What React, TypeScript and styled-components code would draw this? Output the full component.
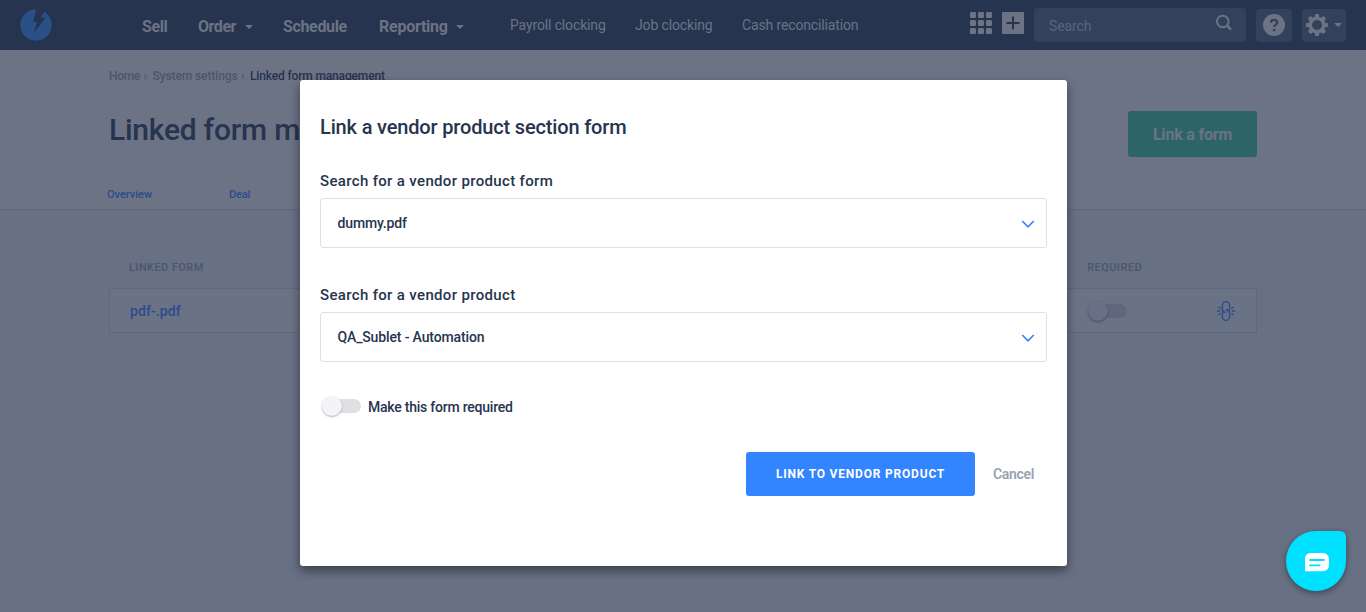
import React from "react";
import styled, { createGlobalStyle } from "styled-components";

const Global = createGlobalStyle`
  * { box-sizing: border-box; }
  body { margin: 0; overflow: hidden; font-family: Roboto, "Liberation Sans", sans-serif; }
  button { font-family: inherit; border: 0; cursor: pointer; }
`;

const Page = styled.div`
  height: 612px;
  overflow: hidden;
  background: #687084;
  color: #27344f;
`;

const Nav = styled.nav`
  height: 50px;
  display: flex;
  background: #27344f;
  color: #6b7385;
`;
const Logo = styled.svg`
  flex: none;
  margin: 9px 0 0 20px;
`;
const MainLinks = styled.div`
  display: flex;
  margin-left: 90px;
  line-height: 20px;
  padding-top: 17px;
`;
const MainLink = styled.a<{ $w: number; $ls: number }>`
  display: flex;
  justify-content: space-between;
  align-items: center;
  height: 20px;
  width: ${(p) => p.$w}px;
  margin-right: 30px;
  font-size: 16px;
  font-weight: 700;
  white-space: nowrap;
  letter-spacing: ${(p) => p.$ls}px;
`;
const Caret = styled.span`
  border: 4px solid transparent;
  border-top-color: #6b7385;
  border-bottom: 0;
`;
const SubLinks = styled.div`
  display: flex;
  gap: 30px;
  margin-left: 16px;
  padding-top: 15px;
  line-height: 20px;
`;
const SubLink = styled.a<{ $w: number }>`
  width: ${(p) => p.$w}px;
  font-size: 14px;
  white-space: nowrap;
  letter-spacing: -0.14px;
`;
const Tools = styled.div`
  display: flex;
  gap: 10px;
  margin-left: auto;
  padding: 9px 20px 0 0;
`;
const ToolIcon = styled.svg`
  margin-top: 3px;
`;
const SearchBox = styled.div`
  width: 212px;
  height: 34px;
  margin-top: -1px;
  padding: 0 13px 0 15px;
  display: flex;
  justify-content: space-between;
  border-radius: 4px;
  background: #34415d;
  font-size: 14px;
  line-height: 37px;
  letter-spacing: -0.1px;
  color: #5b6579;
  & svg { margin-top: 6px; }
`;
const ToolButton = styled.div<{ $w: number }>`
  width: ${(p) => p.$w}px;
  height: 33px;
  display: flex;
  align-items: center;
  justify-content: center;
  gap: 6px;
  padding-bottom: 1px;
  border-radius: 4px;
  background: #34415d;
`;

const Header = styled.header`
  height: 160px;
  padding: 0 109px;
  background: #6b7385;
  border-bottom: 1px solid #5e677b;
`;
const Crumbs = styled.div`
  display: flex;
  padding-top: 18px;
  height: 61px;
  font-size: 12px;
  line-height: 16px;
  font-weight: 500;
  white-space: nowrap;
  color: #4b566c;
`;
const Crumb = styled.span<{ $w: number; $ls: number; $current?: boolean }>`
  width: ${(p) => p.$w}px;
  letter-spacing: ${(p) => p.$ls}px;
  color: ${(p) => (p.$current ? "#27344f" : "#4b566c")};
`;
const TitleRow = styled.div`
  display: flex;
  justify-content: space-between;
`;
const Title = styled.h1`
  margin: 0;
  font-size: 30px;
  line-height: 38px;
  font-weight: 500;
  letter-spacing: -0.25px;
`;
const LinkFormButton = styled.button`
  width: 129px;
  height: 46px;
  padding: 0;
  border-radius: 3px;
  background: #2d6465;
  color: #6b7385;
  font-size: 16px;
  font-weight: 700;
  letter-spacing: -0.2px;
`;
const Tabs = styled.div`
  display: flex;
  margin: 30px 0 0 -2px;
  font-size: 11px;
  line-height: 16px;
  font-weight: 500;
  color: #2b4b8c;
`;
const Tab = styled.a<{ $ls: number }>`
  width: 122px;
  letter-spacing: ${(p) => p.$ls}px;
`;

const Content = styled.main`
  padding: 50px 109px 0;
`;
const Columns = styled.div`
  display: flex;
  justify-content: space-between;
  padding: 0 115px 0 20px;
  height: 28px;
  font-size: 11px;
  line-height: 16px;
  font-weight: 500;
  letter-spacing: 0.42px;
  color: #4b566c;
`;
const Row = styled.div`
  height: 45px;
  display: flex;
  align-items: center;
  padding: 0 20px;
  border: 1px solid #5e677b;
  background: #6a7285;
`;
const FileLink = styled.a`
  flex: 1;
  font-size: 14px;
  font-weight: 500;
  letter-spacing: 0.1px;
  color: #2b4b8c;
`;
const Track = styled.span<{ $dim?: boolean }>`
  display: flex;
  align-items: center;
  width: 36px;
  height: 14px;
  border-radius: 7px;
  background: ${(p) => (p.$dim ? "#5e677b" : "#dfe0e4")};
`;
const Knob = styled.span<{ $dim?: boolean }>`
  flex: none;
  width: 20px;
  height: 20px;
  margin-left: -3px;
  border-radius: 50%;
  background: ${(p) => (p.$dim ? "#677084" : "#f3f4f7")};
  box-shadow: 0 1px 2px ${(p) => (p.$dim ? "rgba(39,52,79,.6)" : "rgba(0,0,0,.3)")};
`;
const UnlinkIcon = styled.svg`
  margin: 0 1px 0 90px;
`;

const Dialog = styled.section`
  position: absolute;
  left: 300px;
  top: 80px;
  width: 767px;
  height: 486px;
  padding: 34px 20px 0;
  border-radius: 3px;
  background: #fff;
  color: #27344f;
  box-shadow: 0 5px 11px rgba(0, 0, 0, 0.28), 0 4px 8px rgba(0, 0, 0, 0.2);
`;
const DialogTitle = styled.h2`
  margin: 0 0 30px;
  height: 26px;
  line-height: 26px;
  font-size: 20px;
  font-weight: 500;
  letter-spacing: -0.16px;
`;
const Field = styled.div`
  height: 114px;
`;
const FieldLabel = styled.div`
  height: 28px;
  line-height: 22px;
  font-size: 15px;
  font-weight: 500;
  letter-spacing: 0.34px;
`;
const Select = styled.div`
  height: 50px;
  display: flex;
  align-items: center;
  justify-content: space-between;
  padding: 0 11px 0 16.5px;
  border: 1px solid #dfe0e4;
  border-radius: 3px;
  font-size: 14px;
  font-weight: 500;
  letter-spacing: -0.14px;
  & svg { margin-top: 2px; }
`;
const ToggleRow = styled.div`
  display: flex;
  align-items: center;
  gap: 7px;
  height: 20px;
  margin-top: -1px;
  padding-left: 5px;
  font-size: 14px;
  font-weight: 500;
  letter-spacing: -0.23px;
  & > span { margin-top: -2px; }
`;
const Actions = styled.div`
  display: flex;
  justify-content: flex-end;
  align-items: center;
  gap: 18px;
  padding-right: 12px;
  margin-top: 35px;
`;
const Primary = styled.button`
  width: 229px;
  height: 44px;
  padding: 0;
  border-radius: 3px;
  background: #3385ff;
  color: #fff;
  font-size: 12px;
  font-weight: 700;
  letter-spacing: 0.8px;
`;
const Cancel = styled.a`
  width: 42px;
  font-size: 14px;
  font-weight: 600;
  letter-spacing: -0.3px;
  color: #9aa2b1;
`;
const Chat = styled.button`
  position: absolute;
  left: 1286px;
  top: 531px;
  width: 60px;
  height: 60px;
  padding: 3px 0 0 2px;
  display: flex;
  align-items: center;
  justify-content: center;
  border-radius: 30px 6px 30px 30px;
  background: #00e0ff;
  box-shadow: 0 2px 6px rgba(0, 0, 0, 0.4);
`;

const Chevron = () => (
  <svg width="14" height="10" viewBox="0 0 14 10" fill="none" stroke="#3385ff" strokeWidth="1.7">
    <path d="M1.2 2 7 7.8 12.8 2" />
  </svg>
);

const gearTeeth = [0, 45, 90, 135, 180, 225, 270, 315];

export default function App() {
  return (
    <>
      <Global />
      <Page>
        <Nav>
          <Logo width="32" height="32" viewBox="0 0 32 32">
            <circle cx="16" cy="16" r="15.7" fill="#2b5087" />
            <path fill="#27344f" d="M16.4-1 13 13h4l-3 10.8L25.4 8.8h-4.7L25 1.5V-1z" />
          </Logo>
          <MainLinks>
            <MainLink $w={26} $ls={-0.4}>Sell</MainLink>
            <MainLink $w={55} $ls={-0.45}>Order<Caret /></MainLink>
            <MainLink $w={66} $ls={-0.35}>Schedule</MainLink>
            <MainLink $w={85} $ls={-0.25}>Reporting<Caret /></MainLink>
          </MainLinks>
          <SubLinks>
            <SubLink $w={95}>Payroll clocking</SubLink>
            <SubLink $w={77}>Job clocking</SubLink>
            <SubLink $w={117}>Cash reconciliation</SubLink>
          </SubLinks>
          <Tools>
            <ToolIcon width="22" height="22" fill="#6b7385">
              {[0, 8, 16].map((y) => [0, 8, 16].map((x) => (
                <rect key={x + "-" + y} x={x} y={y} width="6" height="6" rx="1.2" />
              )))}
            </ToolIcon>
            <ToolIcon width="22" height="22">
              <rect width="22" height="22" rx="1" fill="#6b7385" />
              <path d="M11 4.5v13M4.5 11h13" stroke="#27344f" strokeWidth="2" />
            </ToolIcon>
            <SearchBox>
              Search
              <svg width="18" height="18" fill="none" stroke="#6b7385" strokeWidth="2">
                <circle cx="7.8" cy="7.5" r="5.8" />
                <path d="m12 11.7 4 4" strokeWidth="2.6" />
              </svg>
            </SearchBox>
            <ToolButton $w={36}>
              <svg width="22" height="22">
                <circle cx="11" cy="11" r="11" fill="#6b7385" />
                <path d="M7.9 8.8c0-4 6.3-3.8 6.3-.3 0 2.2-3 2.1-3 4.5" fill="none" stroke="#34415d" strokeWidth="2.3" />
                <circle cx="11.1" cy="16.1" r="1.4" fill="#34415d" />
              </svg>
            </ToolButton>
            <ToolButton $w={44}>
              <svg width="22" height="22" viewBox="-11 -11 22 22">
                {gearTeeth.map((a) => (
                  <rect key={a} x="-2.1" y="-11" width="4.2" height="5" rx="1" fill="#6b7385" transform={`rotate(${a})`} />
                ))}
                <circle r="6.8" fill="none" stroke="#6b7385" strokeWidth="3.6" />
              </svg>
              <Caret />
            </ToolButton>
          </Tools>
        </Nav>
        <Header>
          <Crumbs>
            <Crumb $w={34.5} $ls={-0.3}>Home</Crumb>
            <Crumb $w={9} $ls={0}>›</Crumb>
            <Crumb $w={88.5} $ls={-0.1}>System settings</Crumb>
            <Crumb $w={9} $ls={0}>›</Crumb>
            <Crumb $w={140} $ls={-0.15} $current>Linked form management</Crumb>
          </Crumbs>
          <TitleRow>
            <Title>Linked form management</Title>
            <LinkFormButton>Link a form</LinkFormButton>
          </TitleRow>
          <Tabs>
            <Tab $ls={0}>Overview</Tab>
            <Tab $ls={-0.2}>Deal</Tab>
          </Tabs>
        </Header>
        <Content>
          <Columns>
            <span>LINKED FORM</span>
            <span>REQUIRED</span>
          </Columns>
          <Row>
            <FileLink>pdf-.pdf</FileLink>
            <Track $dim><Knob $dim /></Track>
            <UnlinkIcon width="18" height="20" viewBox="0 0 18 20" fill="none" stroke="#2b4b8c" strokeWidth="1.4">
              <path d="M9.300 11.300C6.700 11.300 5.400 10 5.400 8V4.200a3.600 3.600 0 0 1 7.200 0V8c0 .6-.2 1-.5 1.400M8.700 8.700C11.300 8.700 12.600 10 12.600 12v3.800a3.600 3.600 0 0 1-7.200 0V12c0-.6.2-1 .5-1.400M0 10h3.300M14.700 10H18M1.500 6l2 1.400M1.500 14l2-1.400M16.500 6l-2 1.400M16.500 14l-2-1.400" />
            </UnlinkIcon>
          </Row>
        </Content>
      </Page>
      <Dialog>
        <DialogTitle>Link a vendor product section form</DialogTitle>
        <Field>
          <FieldLabel>Search for a vendor product form</FieldLabel>
          <Select>dummy.pdf<Chevron /></Select>
        </Field>
        <Field>
          <FieldLabel>Search for a vendor product</FieldLabel>
          <Select>QA_Sublet - Automation<Chevron /></Select>
        </Field>
        <ToggleRow>
          <Track><Knob /></Track>
          Make this form required
        </ToggleRow>
        <Actions>
          <Primary>LINK TO VENDOR PRODUCT</Primary>
          <Cancel>Cancel</Cancel>
        </Actions>
      </Dialog>
      <Chat>
        <svg width="24" height="19" viewBox="0 0 24 19">
          <path d="M0 18.3V5.5A5.5 5.5 0 0 1 5.500 0h12.500a6 6 0 0 1 6 6v6.300a6 6 0 0 1-6 6z" fill="#fff" />
          <path d="M5 7h14M5 12.300h9.500" stroke="#00e0ff" strokeWidth="1.8" strokeLinecap="round" />
        </svg>
      </Chat>
    </>
  );
}
